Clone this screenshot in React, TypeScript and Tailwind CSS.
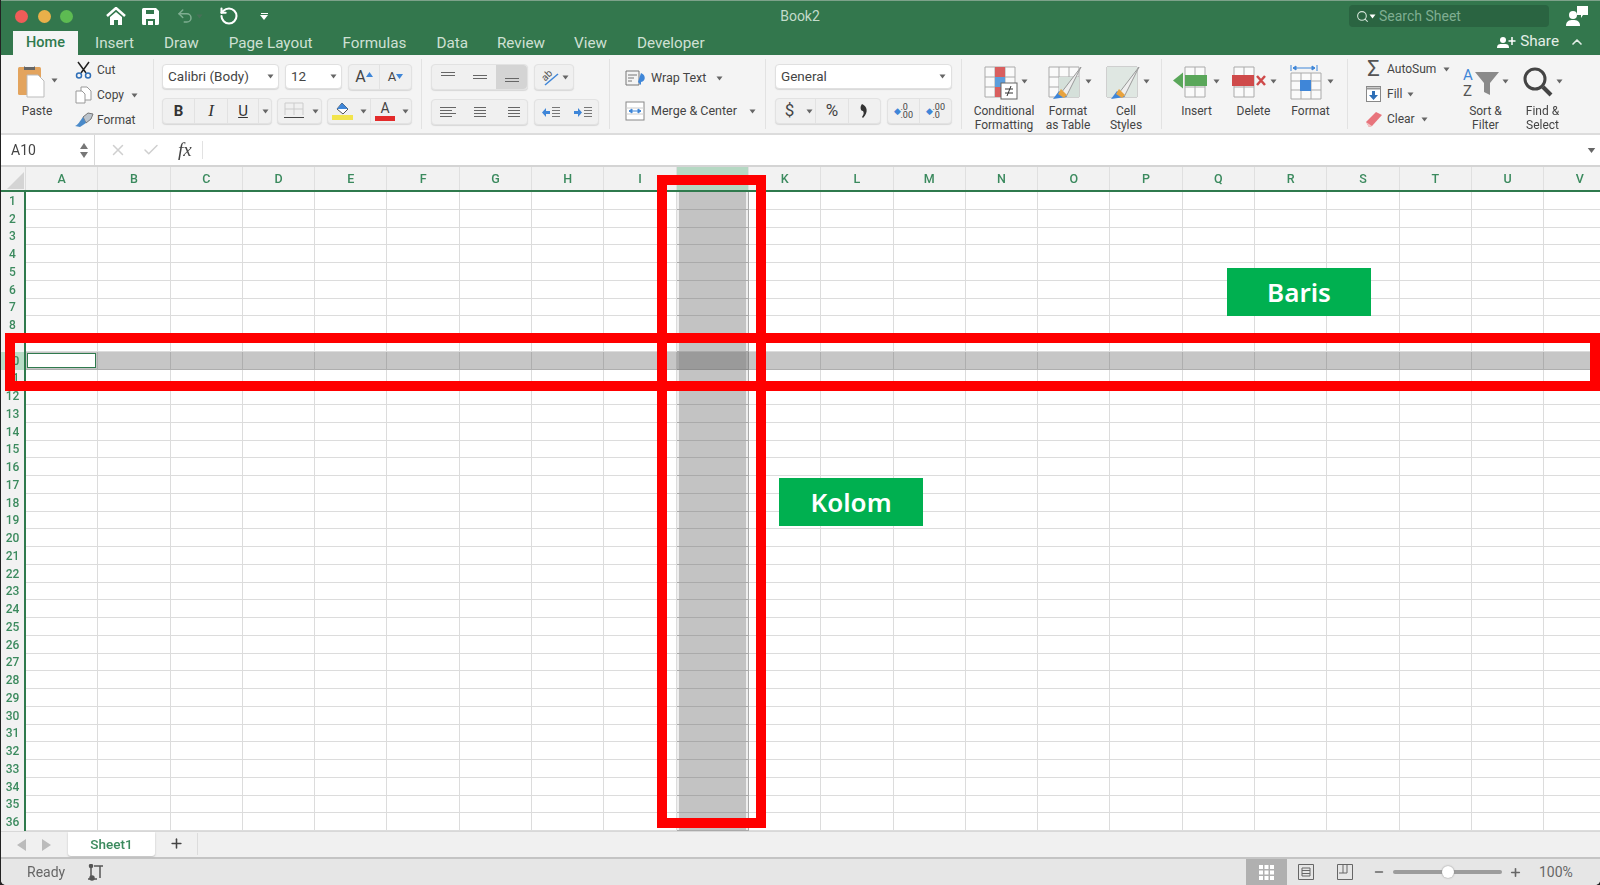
import { Undo2, RotateCw, Search, ChevronUp, Plus, Minus, X, Check } from "lucide-react";
import type { ReactNode } from "react";

const cols = "ABCDEFGHIJKLMNOPQRSTUV".split("");
const rows = Array.from({ length: 36 }, (_, i) => i + 1);

function Caret({ className = "" }: { className?: string }) {
  return (
    <svg width="7" height="5" viewBox="0 0 7 5" className={className}>
      <path d="M0.5 0.5h6L3.5 4.5z" fill="#666" />
    </svg>
  );
}

function Box({ className = "", children }: { className?: string; children?: ReactNode }) {
  return (
    <div className={`flex h-[26px] items-center rounded-[4px] border border-[#e2e2e2] bg-[#f0f0f0] shadow-[0_1px_1px_#d8d8d8] ${className}`}>
      {children}
    </div>
  );
}

function Cell({ className = "", children }: { className?: string; children?: ReactNode }) {
  return <div className={`flex h-full items-center justify-center ${className}`}>{children}</div>;
}

function BigButton({ w, label, icon, caret = true }: { w: string; label: ReactNode; icon: ReactNode; caret?: boolean }) {
  return (
    <div className={`flex shrink-0 flex-col items-center ${w}`}>
      <div className="flex h-[46px] shrink-0 items-center gap-[2px]">
        {icon}
        {caret && <Caret className="mb-[2px]" />}
      </div>
      <div className="text-center text-[12px] leading-[13.5px] text-[#444]">{label}</div>
    </div>
  );
}

function Lines({ aligns }: { aligns: number[] }) {
  return (
    <svg width="16" height="12" viewBox="0 0 16 12" stroke="#666" strokeWidth="1">
      {aligns.map((a, i) => (
        <path key={i} d={`M${a} ${1.5 + i * 3}H${16 - (a === 0 ? (i % 2) * 4 : a === 4 ? 0 : 2)}`} />
      ))}
    </svg>
  );
}

function Indent({ flip }: { flip?: boolean }) {
  return (
    <svg width="20" height="13" viewBox="0 0 20 13">
      <path d={flip ? "M1 5h4V2l4 4.500-4 4.500V8H1z" : "M9 5H5V2L1 6.500 5 11V8h4z"} fill="#3f86d8" />
      <path d="M11 1.500h8M11 4.500h8M11 7.500h8M11 10.500h8" stroke="#777" />
    </svg>
  );
}

function Grid({ children, w = 38, h = 38 }: { children?: ReactNode; w?: number; h?: number }) {
  return (
    <svg width={w} height={h} viewBox="0 0 38 38">
      <path d="M4 4h30v30H4zM4 14h30M4 24h30M14 4v30M24 4v30" fill="#fafafa" stroke="#aaa" />
      {children}
    </svg>
  );
}

function Ribbon() {
  return (
    <div className="flex h-[80px] bg-[#f4f4f4] border-b-2 border-[#dcdcdc]">
      {/* clipboard */}
      <div className="my-[4px] flex w-[153px] border-r border-[#e2e2e2] pl-[17px]">
        <div className="flex w-[57px] flex-col">
          <div className="flex h-[43px] shrink-0 items-center gap-[5px]">
            <svg width="28" height="34" viewBox="0 0 28 34">
              <rect x="0" y="3" width="23" height="28" rx="1.500" fill="#e3a45e" />
              <path d="M7 3h9l1-1v4H6V2z" fill="#666" />
              <path d="M9 11h11l6 6v16H9z" fill="#fff" stroke="#bbb" />
            </svg>
            <Caret />
          </div>
          <div className="w-[38px] text-center text-[12px] text-[#444]">Paste</div>
        </div>
        <div className="flex flex-col gap-[7px] pt-[2px] text-[12px] leading-[18px] text-[#444]">
          <div className="flex items-center gap-[5px]">
            <svg width="17" height="18" viewBox="0 0 17 18" fill="none" stroke="#222" strokeWidth="1.500">
              <path d="M3 1l8 11M14 1L6 12" />
              <circle cx="4" cy="14.500" r="2.500" stroke="#2f6fb7" />
              <circle cx="13" cy="14.500" r="2.500" stroke="#2f6fb7" />
            </svg>
            Cut
          </div>
          <div className="flex items-center gap-[5px]">
            <svg width="17" height="18" viewBox="0 0 17 18" fill="#fff" stroke="#999">
              <path d="M6 1h6l4 4v9H6z" />
              <path d="M1 5h6l3 3v9H1z" />
            </svg>
            Copy
            <Caret className="ml-[2px]" />
          </div>
          <div className="flex items-center gap-[3px]">
            <svg width="19" height="16" viewBox="0 0 19 16">
              <path d="M8 5l5-4 5 1-2 5-5 4z" fill="#bcc4cc" stroke="#777" />
              <path d="M8 5l3 6-6 4-5-1c3-1 5-5 8-9z" fill="#4a8ac9" />
            </svg>
            Format
          </div>
        </div>
      </div>

      {/* font */}
      <div className="my-[4px] flex w-[268px] flex-col gap-[9px] border-r border-[#e2e2e2] pl-[8px] pt-[5px] text-[#444]">
        <div className="flex h-[25px]">
          <div className="flex w-[117px] items-center justify-between rounded-[4px] border border-[#e0e0e0] bg-white pl-[5px] pr-[4px] text-[13.500px] shadow-[0_1px_1px_#d8d8d8]">
            Calibri (Body)
            <Caret />
          </div>
          <div className="ml-[6px] flex w-[57px] items-center justify-between rounded-[4px] border border-[#e0e0e0] bg-white pl-[5px] pr-[4px] text-[13.500px] shadow-[0_1px_1px_#d8d8d8]">
            12
            <Caret />
          </div>
          <Box className="ml-[6px] w-[64px] h-[25px]">
            <Cell className="w-[32px] border-r border-[#e2e2e2] text-[16px]">
              A<svg width="7" height="5" viewBox="0 0 7 5" className="mb-[5px]"><path d="M0 5h7L3.500 0z" fill="#3f86d8" /></svg>
            </Cell>
            <Cell className="w-[32px] text-[13px]">
              A<svg width="7" height="5" viewBox="0 0 7 5" className="mb-[2px]"><path d="M0 0h7L3.500 5z" fill="#3f86d8" /></svg>
            </Cell>
          </Box>
        </div>
        <div className="flex">
          <Box className="w-[110px]">
            <Cell className="w-[32px] border-r border-[#e2e2e2] text-[15px] font-bold text-[#333]">B</Cell>
            <Cell className="w-[33px] border-r border-[#e2e2e2] font-['Liberation_Serif',serif] text-[17px] italic text-[#333]">I</Cell>
            <Cell className="w-[31px] border-r border-[#e2e2e2] text-[15px] text-[#333] underline">U</Cell>
            <Cell className="flex-1"><Caret /></Cell>
          </Box>
          <Box className="ml-[5px] w-[45px]">
            <Cell className="w-[31px]">
              <svg width="20" height="18" viewBox="0 0 20 18" fill="none">
                <path d="M1 1h18M1 7h18M10 1v12M1 1v12M19 1v12" stroke="#ccc" />
                <path d="M0 15.500h20" stroke="#444" />
              </svg>
            </Cell>
            <Cell className="flex-1"><Caret /></Cell>
          </Box>
          <Box className="ml-[5px] w-[85px]">
            <Cell className="w-[29px] flex-col">
              <svg width="16" height="13" viewBox="0 0 16 13">
                <path d="M7 1l6 6-5 5-6-5z" fill="#fff" stroke="#555" />
                <path d="M7 1l6 6H2z" fill="#3f86d8" />
              </svg>
              <div className="h-[5px] w-[21px] bg-[#f2e44c]" />
            </Cell>
            <Cell className="w-[14px] border-r border-[#e2e2e2]"><Caret /></Cell>
            <Cell className="w-[28px] flex-col text-[14px] leading-[14px]">
              A
              <div className="mt-[1px] h-[5px] w-[20px] bg-[#e32a2a]" />
            </Cell>
            <Cell className="flex-1"><Caret /></Cell>
          </Box>
        </div>
      </div>

      {/* alignment */}
      <div className="my-[4px] flex w-[188px] flex-col gap-[9px] border-r border-[#e2e2e2] pl-[9px] pt-[5px]">
        <div className="flex">
          <Box className="w-[97px]">
            <Cell className="w-[32px]"><svg width="16" height="12"><path d="M1 1.500h14M1 4.500h14" stroke="#666" /></svg></Cell>
            <Cell className="w-[32px]"><svg width="16" height="12"><path d="M1 4.500h14M1 7.500h14" stroke="#666" /></svg></Cell>
            <Cell className="w-[31px] rounded-r-[4px] bg-[#d4d4d4]"><svg width="16" height="12"><path d="M1 7.500h14M1 10.500h14" stroke="#666" /></svg></Cell>
          </Box>
          <Box className="ml-[6px] w-[40px] justify-center gap-[1px]">
            <svg width="22" height="22" viewBox="0 0 22 22">
              <text x="3" y="12" fontSize="10" fill="#555" transform="rotate(-45 9 10)">ab</text>
              <path d="M6 19L19 8" stroke="#3f86d8" strokeWidth="1.500" />
            </svg>
            <Caret />
          </Box>
        </div>
        <div className="flex">
          <Box className="w-[97px]">
            <Cell className="w-[32px]"><Lines aligns={[0, 0, 0, 0]} /></Cell>
            <Cell className="w-[32px]"><Lines aligns={[2, 2, 2, 2]} /></Cell>
            <Cell className="w-[31px]"><Lines aligns={[4, 4, 4, 4]} /></Cell>
          </Box>
          <Box className="ml-[6px] w-[65px]">
            <Cell className="w-[32px]"><Indent /></Cell>
            <Cell className="w-[31px]"><Indent flip /></Cell>
          </Box>
        </div>
      </div>

      {/* wrap and merge */}
      <div className="my-[4px] flex w-[156px] flex-col gap-[9px] border-r border-[#e2e2e2] pl-[15px] pt-[7px] text-[12.500px] text-[#444]">
        <div className="flex h-[24px] items-center gap-[4px]">
          <svg width="22" height="16" viewBox="0 0 22 16">
            <path d="M1 1h13v14H1zM3 5h9M3 8h6M3 11h4" fill="none" stroke="#777" />
            <path d="M16 3c5 2 5 8 0 9l-3 0 3-3 0 6-3-3z" fill="#3f86d8" />
          </svg>
          Wrap Text
          <Caret className="ml-[6px]" />
        </div>
        <div className="flex h-[24px] items-center gap-[6px]">
          <svg width="20" height="20" viewBox="0 0 20 20">
            <rect x="1" y="1" width="18" height="18" fill="#fff" stroke="#888" />
            <path d="M1 7h18M1 13h18" stroke="#ccc" />
            <path d="M4 10h12M4 10l3-2v4zM16 10l-3-2v4z" stroke="#3f86d8" fill="#3f86d8" />
          </svg>
          Merge &amp; Center
          <Caret className="ml-[6px]" />
        </div>
      </div>

      {/* number */}
      <div className="my-[4px] flex w-[196px] flex-col gap-[9px] border-r border-[#e2e2e2] pl-[9px] pt-[5px] text-[#444]">
        <div className="flex h-[25px] w-[177px] items-center justify-between rounded-[4px] border border-[#e0e0e0] bg-white pl-[5px] pr-[5px] text-[13.500px] shadow-[0_1px_1px_#d8d8d8]">
          General
          <Caret />
        </div>
        <div className="flex">
          <Box className="w-[106px]">
            <Cell className="w-[27px] text-[17px]">$</Cell>
            <Cell className="w-[13px] border-r border-[#e2e2e2]"><Caret /></Cell>
            <Cell className="w-[33px] border-r border-[#e2e2e2] text-[17px]">%</Cell>
            <Cell className="flex-1">
              <svg width="9" height="14" viewBox="0 0 9 14">
                <path d="M2 0c5 2 7 8 1 14l-1-1c2-3 2-4 1-6-3 0-3-5-1-7z" fill="#333" />
              </svg>
            </Cell>
          </Box>
          <Box className="ml-[6px] w-[65px] text-[9px] leading-[8px]">
            <Cell className="w-[32px] border-r border-[#e2e2e2]">
              <span className="text-[#3f86d8]">◆</span>
              <span>.0<br />.00</span>
            </Cell>
            <Cell className="w-[32px]">
              <span className="text-[#3f86d8]">◆</span>
              <span>.00<br />.0</span>
            </Cell>
          </Box>
        </div>
      </div>

      {/* styles */}
      <div className="my-[4px] flex w-[200px] border-r border-[#e2e2e2] pl-[10px]">
        <BigButton
          w="w-[64px]"
          label={<>Conditional<br />Formatting</>}
          icon={
            <Grid>
              <path d="M14 4h10v10H14z" fill="#d95f5f" />
              <path d="M14 14h10v10H14z" fill="#5d9edc" />
              <path d="M14 24h10v10H14z" fill="#d95f5f" />
              <rect x="20" y="20" width="16" height="16" fill="#fff" stroke="#666" />
              <path d="M24 26h8M24 30h8M30 23l-4 10" stroke="#333" fill="none" />
            </Grid>
          }
        />
        <BigButton
          w="w-[64px]"
          label={<>Format<br />as Table</>}
          icon={
            <Grid>
              <path d="M14 14h20v20H14z" fill="#d5e0da" />
              <path d="M36 4L16 30l5 4z" fill="#eee" stroke="#999" />
              <path d="M14 28l8 6-14 2z" fill="#3f86d8" />
              <path d="M16 26l6 6-3 3-6-4z" fill="#e8a33e" />
            </Grid>
          }
        />
        <BigButton
          w="w-[52px]"
          label={<>Cell<br />Styles</>}
          icon={
            <Grid>
              <path d="M4 4h30v30H4z" fill="#dfe7e2" />
              <path d="M36 4L16 30l5 4z" fill="#eee" stroke="#999" />
              <path d="M14 28l8 6-14 2z" fill="#3f86d8" />
              <path d="M16 26l6 6-3 3-6-4z" fill="#e8a33e" />
            </Grid>
          }
        />
      </div>

      {/* cells */}
      <div className="my-[4px] flex w-[186px] border-r border-[#e2e2e2] pl-[6px]">
        <BigButton
          w="w-[57px]"
          label="Insert"
          icon={
            <svg width="38" height="38" viewBox="0 0 38 38">
              <path d="M12 4h20v30H12zM12 14h20M12 24h20M22 4v30" fill="#fafafa" stroke="#aaa" />
              <rect x="12" y="12" width="22" height="11" fill="#5aa75a" />
              <path d="M0 17.500l10-8v16z" fill="#5aa75a" />
            </svg>
          }
        />
        <BigButton
          w="w-[57px]"
          label="Delete"
          icon={
            <svg width="38" height="38" viewBox="0 0 38 38">
              <path d="M4 4h20v30H4zM4 14h20M4 24h20M14 4v30" fill="#fafafa" stroke="#aaa" />
              <rect x="2" y="12" width="22" height="11" fill="#cf4a4a" />
              <path d="M27 13l8 9M35 13l-8 9" stroke="#cf4a4a" strokeWidth="2.500" />
            </svg>
          }
        />
        <BigButton
          w="w-[57px]"
          label="Format"
          icon={
            <svg width="38" height="38" viewBox="0 0 38 38">
              <path d="M4 10h30v26H4zM4 18h30M4 27h30M14 10v26M24 10v26" fill="#fafafa" stroke="#aaa" />
              <rect x="13" y="17" width="11" height="11" fill="#3f86d8" />
              <path d="M4 2v6M30 2v6M6 5h22M6 5l3-2v4zM28 5l-3-2v4z" stroke="#3f86d8" fill="#3f86d8" />
            </svg>
          }
        />
      </div>

      {/* editing */}
      <div className="my-[4px] flex pl-[17px]">
        <div className="flex w-[92px] shrink-0 flex-col gap-[7px] pt-[1px] text-[12px] leading-[18px] text-[#444]">
          <div className="flex items-center gap-[5px]">
            <span className="w-[17px] text-center text-[22px] leading-[18px] text-[#555]">Σ</span>
            AutoSum
            <Caret className="ml-[2px]" />
          </div>
          <div className="flex items-center gap-[5px]">
            <svg width="17" height="18" viewBox="0 0 17 18">
              <rect x="1.500" y="1.500" width="14" height="15" fill="#fff" stroke="#888" />
              <path d="M1.500 3.500h14" stroke="#999" strokeWidth="2" />
              <path d="M7 6h3v4h3l-4.500 5L4 10h3z" fill="#2f6fb7" />
            </svg>
            Fill
            <Caret />
          </div>
          <div className="flex items-center gap-[4px]">
            <svg width="18" height="18" viewBox="0 0 18 18">
              <path d="M1 12L11 2l6 3L7 16l-3 1z" fill="#e8747c" />
              <path d="M1 12l6 4-3 1z" fill="#f3c4c4" />
            </svg>
            Clear
            <Caret className="ml-[2px]" />
          </div>
        </div>
        <BigButton
          w="w-[57px]"
          label={<>Sort &amp;<br />Filter</>}
          icon={
            <svg width="38" height="34" viewBox="0 0 38 34">
              <text x="1" y="15" fontSize="15" fill="#3f86d8">A</text>
              <text x="1" y="31" fontSize="15" fill="#555">Z</text>
              <path d="M13 7h24l-9 11v12l-6-3v-9z" fill="#8a8a8a" />
            </svg>
          }
        />
        <BigButton
          w="w-[57px]"
          label={<>Find &amp;<br />Select</>}
          icon={
            <svg width="32" height="32" viewBox="0 0 32 32" fill="none" stroke="#444">
              <circle cx="13" cy="13" r="10" strokeWidth="3" />
              <path d="M21 21l8 8" strokeWidth="4" />
            </svg>
          }
        />
      </div>
    </div>
  );
}

function Sheet() {
  return (
    <div className="h-[639px] overflow-hidden bg-white">
      {rows.map((r) => (
        <div key={r} className="flex h-[17.750px]">
          <div className={`flex w-[25px] shrink-0 items-center justify-center border-r-2 border-[#2f7a4d] text-[12px] font-medium text-[#3b8a5e] ${r === 10 ? "bg-[#b9dcc7]" : "bg-[#f2f2f2]"}`}>
            {r}
          </div>
          {cols.map((c) => {
            const inCol = c === "J";
            const inRow = r === 10;
            let bg = "bg-white border-[#dcdcdc]";
            if (inCol && inRow) bg = "bg-[#9a9a9a] border-[#8d8d8d] shadow-[inset_2px_0_0_#aaa,inset_-2px_0_0_#aaa]";
            else if (inCol) bg = "bg-[#c3c3c3] border-[#aaaaaa] shadow-[inset_2px_0_0_#eee,inset_-2px_0_0_#eee]";
            else if (inRow) bg = "bg-[#c6c6c6] border-[#aeaeae]";
            return (
              <div key={c} className={`w-[72.300px] shrink-0 border-r border-b p-[1px] ${bg} ${c === "V" ? "grow" : ""}`}>
                {inRow && c === "A" && <div className="h-full border border-[#2f7a4d] bg-white" />}
              </div>
            );
          })}
        </div>
      ))}
    </div>
  );
}

export default function App() {
  return (
    <div className="relative h-[885px] w-[1600px] overflow-hidden bg-[#222] font-['Roboto',sans-serif]">
      <div className="ml-[1px] h-full overflow-hidden rounded-b-[5px] bg-[#f4f4f4] blur-[0.4px]">
        {/* title bar */}
        <div className="flex h-[31px] items-center border-t border-[#7da28a] bg-[#33774d] pl-[14px]">
          <span className="h-[13px] w-[13px] rounded-full bg-[#ee5c58]" />
          <span className="ml-[10px] h-[13px] w-[13px] rounded-full bg-[#e9b04a]" />
          <span className="ml-[9px] h-[13px] w-[13px] rounded-full bg-[#5dbb52]" />
          <svg width="20" height="18" viewBox="0 0 20 18" className="ml-[33px]">
            <path d="M1 9l9-8 9 8" fill="none" stroke="#fff" strokeWidth="2.500" />
            <path d="M4 10l6-5 6 5v8h-4v-5H8v5H4z" fill="#fff" />
          </svg>
          <svg width="17" height="17" viewBox="0 0 17 17" className="ml-[16px]">
            <path d="M0 1.500A1.500 1.500 0 0 1 1.500 0H14l3 3v12.500a1.500 1.500 0 0 1-1.500 1.500h-14A1.500 1.500 0 0 1 0 15.500z" fill="#fff" />
            <path d="M4 2h8v4H4zM4 11h9v6H4z" fill="#33774d" />
            <path d="M6 13h5v4H6z" fill="#fff" />
          </svg>
          <Undo2 size={18} className="ml-[17px] text-[#7fae91]" />
          <Caret className="ml-[2px] opacity-40" />
          <RotateCw size={20} strokeWidth={2.5} className="ml-[16px] -scale-x-100 text-white" />
          <div className="ml-[21px] flex flex-col items-center gap-[1px]">
            <div className="h-[1px] w-[7px] bg-white" />
            <svg width="8" height="5" viewBox="0 0 8 5"><path d="M0 0h8L4 5z" fill="#fff" /></svg>
          </div>
          <div className="ml-[502px] w-[60px] text-center text-[14px] text-[#c3dccb]">Book2</div>
          <div className="ml-[519px] flex h-[22px] w-[200px] items-center rounded-[4px] bg-[#2a6441] pl-[7px] text-[14px] text-[#7fae91]">
            <Search size={13} className="text-[#d5e5da]" />
            <Caret className="mr-[3px] brightness-[3]" />
            Search Sheet
          </div>
          <svg width="24" height="22" viewBox="0 0 24 22" className="ml-[16px]">
            <path d="M12 1h11v9h-5l-2 3v-3h-4z" fill="#fff" />
            <circle cx="8" cy="10" r="4" fill="#fff" />
            <path d="M1 21c0-5 3-6 7-6s7 1 7 6z" fill="#fff" />
          </svg>
        </div>

        {/* tabs */}
        <div className="flex h-[24px] items-center bg-[#33774d] pl-[12px] pr-[15px] text-[15.250px] text-[#cfe0d4]">
          <div className="flex h-full w-[65px] items-center justify-center bg-[#f4f4f4] text-[14.500px] font-medium text-[#2f7a4d]">Home</div>
          <span className="ml-[17px]">Insert</span>
          <span className="ml-[30px]">Draw</span>
          <span className="ml-[30px]">Page Layout</span>
          <span className="ml-[30px]">Formulas</span>
          <span className="ml-[30px]">Data</span>
          <span className="ml-[29px]">Review</span>
          <span className="ml-[29px]">View</span>
          <span className="ml-[30px]">Developer</span>
          <svg width="20" height="14" viewBox="0 0 20 14" className="mb-[3px] ml-auto">
            <circle cx="6" cy="5" r="3" fill="#fff" />
            <path d="M0 13c0-4 2-4 6-4s6 0 6 4z" fill="#fff" />
            <path d="M15 2v8M11.500 6h7" stroke="#fff" strokeWidth="1.500" />
          </svg>
          <span className="mb-[3px] ml-[3px] text-[#e3eee7]">Share</span>
          <ChevronUp size={16} strokeWidth={2.5} className="mb-[3px] ml-[10px] text-[#e3eee7]" />
        </div>

        <Ribbon />

        {/* formula bar */}
        <div className="flex h-[32px] items-center border-b-2 border-[#d4d4d4] bg-white">
          <div className="flex h-full w-[94px] items-center justify-between border-r border-[#d8d8d8] pl-[10px] pr-[6px] text-[14px] text-[#444]">
            A10
            <div className="flex flex-col gap-[3px]">
              <svg width="8" height="6" viewBox="0 0 8 6"><path d="M0 6h8L4 0z" fill="#777" /></svg>
              <svg width="8" height="6" viewBox="0 0 8 6"><path d="M0 0h8L4 6z" fill="#777" /></svg>
            </div>
          </div>
          <X size={18} className="ml-[14px] text-[#cfcfcf]" strokeWidth={2} />
          <Check size={18} className="ml-[15px] text-[#cfcfcf]" strokeWidth={2} />
          <span className="ml-[18px] font-['Liberation_Serif',serif] text-[19px] italic text-[#444]">fx</span>
          <div className="ml-[10px] h-[18px] border-l border-[#e2e2e2]" />
          <Caret className="ml-auto mr-[5px] scale-125" />
        </div>

        {/* column headers */}
        <div className="flex h-[25px] border-b-2 border-[#2f7a4d] bg-[#f2f2f2] text-[12.500px] font-medium text-[#3b8a5e]">
          <div className="flex w-[25px] shrink-0 items-end justify-end border-r border-[#dcdcdc]">
            <svg width="20" height="20" viewBox="0 0 20 20"><path d="M19 2v17H2z" fill="#d4d4d4" /></svg>
          </div>
          {cols.map((c) => (
            <div key={c} className={`flex w-[72.300px] shrink-0 items-center justify-center border-r border-[#e0e0e0] pt-[1px] ${c === "J" ? "bg-[#b5d8c3]" : ""}`}>
              {c === "J" ? "" : c}
            </div>
          ))}
        </div>

        <Sheet />

        {/* sheet tabs */}
        <div className="flex h-[28px] items-start border-t border-[#d8d8d8] border-b-2 border-b-[#c4c4c4] bg-[#f0f0f0]">
          <svg width="9" height="12" viewBox="0 0 9 12" className="ml-[16px] mt-[7px]"><path d="M9 0v12L0 6z" fill="#bbb" /></svg>
          <svg width="9" height="12" viewBox="0 0 9 12" className="ml-[16px] mt-[7px]"><path d="M0 0v12l9-6z" fill="#bbb" /></svg>
          <div className="ml-[17px] flex h-[24px] w-[87px] items-center justify-center rounded-b-[3px] bg-white text-[13.500px] font-medium text-[#3b8a5e] shadow-[0_1px_2px_#bbb]">Sheet1</div>
          <Plus size={15} strokeWidth={2.5} className="ml-[14px] mt-[4px] text-[#444]" />
          <div className="ml-[13px] mt-[1px] h-[22px] border-l border-[#dcdcdc]" />
        </div>

        {/* status bar */}
        <div className="flex h-[26px] items-center bg-[#e6e6e6] pl-[26px] text-[14px] text-[#666]">
          Ready
          <svg width="18" height="17" viewBox="0 0 18 17" className="ml-[22px]" fill="none" stroke="#555" strokeWidth="1.500">
            <path d="M4 3v9M1 15h9M7 2h9M13 2v12" />
            <circle cx="4" cy="2" r="1.500" fill="#555" />
            <circle cx="5" cy="14" r="2" fill="#555" />
          </svg>
          <div className="ml-auto flex h-full items-center">
            <div className="flex h-full w-[41px] items-center justify-center bg-[#b0b0b0]">
              <svg width="15" height="15" viewBox="0 0 15 15" fill="#fff">
                <path d="M0 0h4v4H0zM5.500 0h4v4h-4zM11 0h4v4h-4zM0 5.500h4v4H0zM5.500 5.500h4v4h-4zM11 5.500h4v4h-4zM0 11h4v4H0zM5.500 11h4v4h-4zM11 11h4v4h-4z" />
              </svg>
            </div>
            <svg width="16" height="16" viewBox="0 0 16 16" className="ml-[11px]" fill="none" stroke="#666">
              <path d="M.5.500h15v15H.5zM4 4h8v8H4zM4 6.500h8M4 9.500h8" />
            </svg>
            <svg width="16" height="16" viewBox="0 0 16 16" className="ml-[23px]" fill="none" stroke="#666">
              <path d="M.5.500h15v15H.5zM2 9h8V.5M6 .5V9" />
            </svg>
            <Minus size={12} strokeWidth={3} className="ml-[20px] text-[#666]" />
            <div className="relative ml-[8px] h-[4px] w-[109px] rounded-full bg-[#9c9c9c]">
              <div className="absolute left-[49px] top-[-4px] h-[12px] w-[12px] rounded-full bg-white shadow-[0_0_2px_#888]" />
            </div>
            <Plus size={13} strokeWidth={3} className="ml-[7px] text-[#666]" />
            <span className="ml-[17px] mr-[27px] w-[34px] text-[14px]">100%</span>
          </div>
        </div>
      </div>

      {/* annotations drawn over the screenshot */}
      <div className="absolute left-[657px] top-[175px] h-[653px] w-[109px] border-[10px] border-[#ff0000]" />
      <div className="absolute left-[5px] top-[333px] h-[58px] w-[1595px] border-[10px] border-[#ff0000]" />
      <div className="absolute left-[1227px] top-[268px] flex h-[48px] w-[144px] items-center justify-center bg-[#00b050] font-['Noto_Sans',sans-serif] text-[26px] font-semibold text-white">Baris</div>
      <div className="absolute left-[779px] top-[478px] flex h-[48px] w-[144px] items-center justify-center bg-[#00b050] font-['Noto_Sans',sans-serif] text-[26px] font-semibold text-white">Kolom</div>
    </div>
  );
}
